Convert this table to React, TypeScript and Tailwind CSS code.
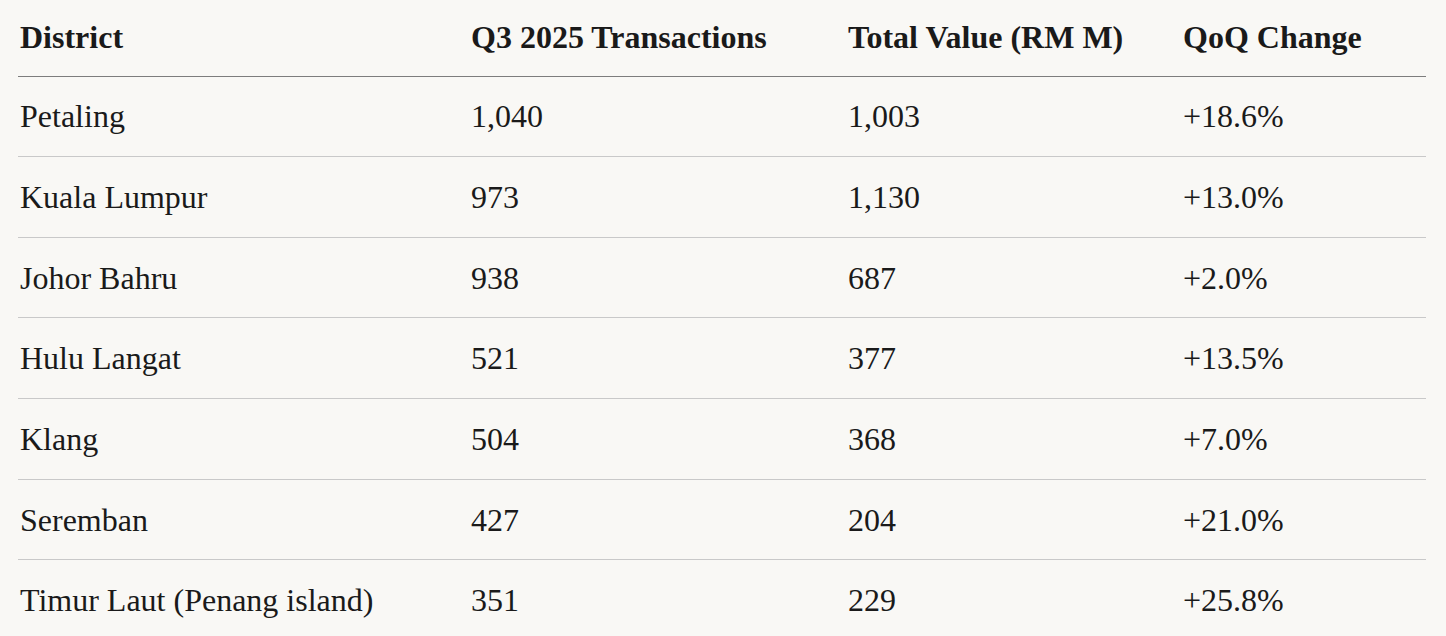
import React from "react";

const rows = [
  { district: "Petaling", tx: "1,040", value: "1,003", change: "+18.6%" },
  { district: "Kuala Lumpur", tx: "973", value: "1,130", change: "+13.0%" },
  { district: "Johor Bahru", tx: "938", value: "687", change: "+2.0%" },
  { district: "Hulu Langat", tx: "521", value: "377", change: "+13.5%" },
  { district: "Klang", tx: "504", value: "368", change: "+7.0%" },
  { district: "Seremban", tx: "427", value: "204", change: "+21.0%" },
  { district: "Timur Laut (Penang island)", tx: "351", value: "229", change: "+25.8%" },
];

export default function App() {
  return (
    <div className="min-h-screen bg-[#f9f8f5] px-[18px] font-['Liberation_Serif',serif] text-[#1a1a1a]">
      <table className="w-[1408px] table-fixed border-collapse text-left text-[32px] leading-[36px]">
        <colgroup>
          <col className="w-[451px]" />
          <col className="w-[377px]" />
          <col className="w-[335px]" />
          <col />
        </colgroup>
        <thead>
          <tr className="h-[76px] border-b border-[#7d7d7d]">
            <th className="px-[2px] pb-[1px] font-bold">District</th>
            <th className="px-[2px] pb-[1px] font-bold">Q3 2025 Transactions</th>
            <th className="px-[2px] pb-[1px] font-bold">Total Value (RM M)</th>
            <th className="px-[2px] pb-[1px] font-bold">QoQ Change</th>
          </tr>
        </thead>
        <tbody>
          {rows.map((r) => (
            <tr key={r.district} className="h-[80.67px] border-b border-[#c9c9c9]">
              <td className="px-[2px]">{r.district}</td>
              <td className="px-[2px]">{r.tx}</td>
              <td className="px-[2px]">{r.value}</td>
              <td className="px-[2px]">{r.change}</td>
            </tr>
          ))}
        </tbody>
      </table>
    </div>
  );
}
